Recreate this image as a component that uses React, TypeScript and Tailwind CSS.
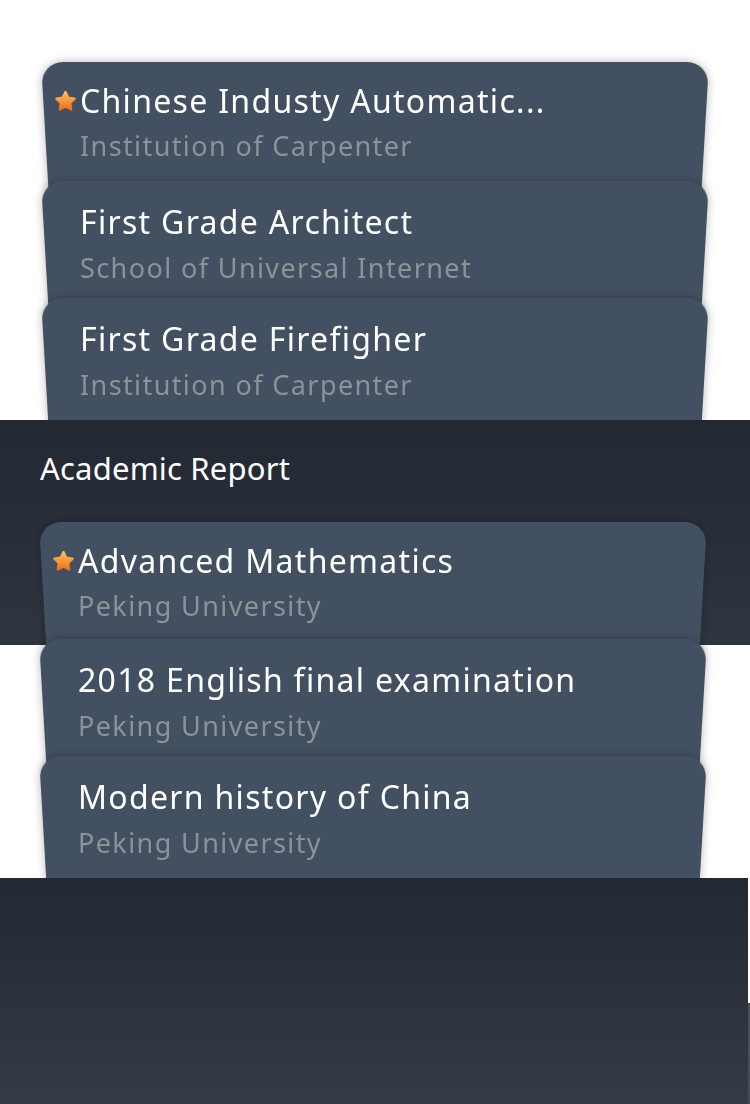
import React from "react";

type Item = { title: string; sub: string; star?: boolean; h: number; first?: boolean };

const top: Item[] = [
  { title: "Chinese Industy Automatic...", sub: "Institution of Carpenter", star: true, h: 119, first: true },
  { title: "First Grade Architect", sub: "School of Universal Internet", h: 117 },
  { title: "First Grade Firefigher", sub: "Institution of Carpenter", h: 140 },
];

const bottom: Item[] = [
  { title: "Advanced Mathematics", sub: "Peking University", star: true, h: 117, first: true },
  { title: "2018 English final examination", sub: "Peking University", h: 117 },
  { title: "Modern history of China", sub: "Peking University", h: 140 },
];

function Star() {
  return (
    <svg width="25" height="25" viewBox="0 0 24 24" className="absolute left-[12px] top-[27px]">
      <defs>
        <linearGradient id="sg" x1="0" y1="0" x2="0" y2="1">
          <stop offset="0" stopColor="#ffbf5a" />
          <stop offset="1" stopColor="#f26f1c" />
        </linearGradient>
      </defs>
      <path
        d="M12 2.8l2.75 5.6 6.1.9-4.4 4.3 1.05 6.1L12 16.8l-5.5 2.9 1.05-6.1-4.4-4.3 6.1-.9z"
        fill="url(#sg)"
        stroke="url(#sg)"
        strokeWidth="2.2"
        strokeLinejoin="round"
      />
    </svg>
  );
}

function Card({ item }: { item: Item }) {
  return (
    <div className="relative w-[668px]" style={{ height: item.h }}>
      <div className="absolute left-0 top-0 w-[668px] h-[150px] origin-top rounded-t-[22px] bg-[#435061] shadow-[0_0_10px_rgba(0,0,0,0.28)] [transform:perspective(600px)_rotateX(-6deg)]" />
      <div className={item.first ? "relative pl-[39px] pt-[19px]" : "relative pl-[39px] pt-[21px]"}>
        {item.star && <Star />}
        <div className="text-[32px] leading-[40px] tracking-[1.3px] text-white whitespace-nowrap font-['Noto_Sans',sans-serif]">
          {item.title}
        </div>
        <div
          className={
            item.first
              ? "mt-[7px] text-[27px] leading-[36px] tracking-[1.4px] text-[#8d9298] whitespace-nowrap font-['Noto_Sans',sans-serif]"
              : "mt-[8px] text-[27px] leading-[36px] tracking-[1.4px] text-[#8d9298] whitespace-nowrap font-['Noto_Sans',sans-serif]"
          }
        >
          {item.sub}
        </div>
      </div>
    </div>
  );
}

export default function App() {
  return (
    <div className="w-[750px] h-[1104px] overflow-hidden bg-white">
      <section className="h-[420px] overflow-hidden pt-[62px] pl-[41px]">
        {top.map((it, i) => (
          <Card key={i} item={it} />
        ))}
      </section>
      <section className="h-[458px] overflow-hidden">
        <div className="h-[225px] bg-gradient-to-b from-[#222933] to-[#2e3540] pl-[40px] pt-[30px]">
          <h2 className="text-[31px] leading-[36px] tracking-[0.2px] text-white font-['Noto_Sans',sans-serif]">
            Academic Report
          </h2>
        </div>
        <div className="-mt-[123px] pl-[39px]">
          {bottom.map((it, i) => (
            <Card key={i} item={it} />
          ))}
        </div>
      </section>
      <footer className="h-[226px] flex">
        <div className="w-[748px] h-full bg-gradient-to-b from-[#222933] to-[#343b46]" />
        <div className="w-[2px] h-full flex flex-col">
          <div className="h-[125px] bg-white" />
          <div className="flex-1 bg-[#4a4d52]" />
        </div>
      </footer>
    </div>
  );
}
